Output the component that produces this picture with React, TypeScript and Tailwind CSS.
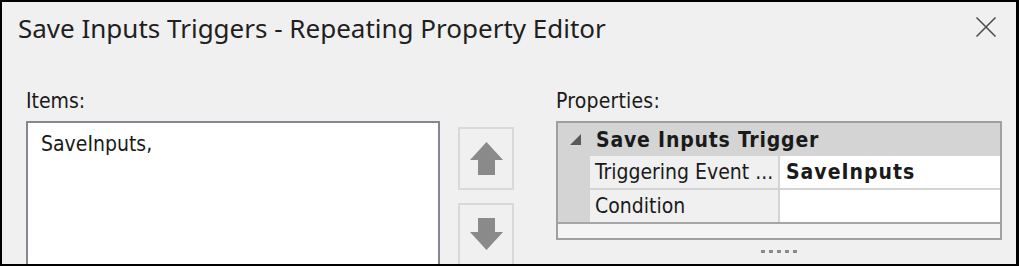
export default function App() {
  const tah = "font-['DejaVu_Sans_Condensed','DejaVu_Sans',sans-serif]";
  return (
    <div className="w-[1019px] h-[266px] overflow-hidden bg-[#f0f0f0] border-2 border-r-[3px] border-black flex flex-col">
      <div className="h-[56px] shrink-0 flex items-start justify-between pl-[16px] pr-[20px]">
        <span className="mt-[11px] font-['Noto_Sans',sans-serif] text-[26px] leading-[30px] text-[#1f1f1f] whitespace-nowrap">
          Save Inputs Triggers - Repeating Property Editor
        </span>
        <svg className="mt-[15px]" width="20" height="20" viewBox="0 0 20 20">
          <path d="M0.5 0.5 L19.5 19.5 M19.5 0.5 L0.5 19.5" stroke="#4a4a4a" strokeWidth="1.5" fill="none" />
        </svg>
      </div>
      <div className={`flex pl-[24px] ${tah} text-[21px] text-[#1a1a1a]`}>
        <div className="w-[414px] shrink-0 flex flex-col">
          <div className="h-[63px] pt-[31px] leading-[24px]">Items:</div>
          <div className="h-[200px] border-2 border-[#828790] bg-white pl-[13px] pt-[9px] leading-[24px]">
            SaveInputs,
          </div>
        </div>
        <div className="ml-[18px] shrink-0 flex flex-col gap-[13px] pt-[69px]">
          <div className="w-[56px] h-[63px] border-2 border-[#d9d9d9] flex items-center justify-center">
            <svg width="33" height="33" viewBox="0 0 33 33">
              <polygon points="16.5,0 33,18 25,18 25,33 8,33 8,18 0,18" fill="#8a8a8a" />
            </svg>
          </div>
          <div className="w-[56px] h-[63px] border-2 border-[#d9d9d9] flex items-start justify-center pt-[13px]">
            <svg width="33" height="33" viewBox="0 0 33 33">
              <polygon points="8,0 25,0 25,14 33,14 16.5,32 0,14 8,14" fill="#8a8a8a" />
            </svg>
          </div>
        </div>
        <div className="ml-[42px] w-[446px] shrink-0 flex flex-col">
          <div className="h-[63px] pt-[31px] leading-[24px] tracking-[0.2px]">Properties:</div>
          <div className="h-[119px] border-2 border-[#a0a0a0] flex flex-col">
            <div className="h-[33px] shrink-0 bg-[#d4d4d4] flex items-center">
              <svg className="ml-[12px]" width="11" height="11" viewBox="0 0 11 11">
                <polygon points="11,0 11,11 0,11" fill="#595959" />
              </svg>
              <span className="ml-[15px] font-bold leading-[24px] tracking-[0.8px]">Save Inputs Trigger</span>
            </div>
            <div className="h-[34px] shrink-0 flex border-b-2 border-[#d4d4d4]">
              <div className="w-[32px] bg-[#d4d4d4]" />
              <div className="w-[188px] bg-[#f0f0f0] pl-[5px] flex items-center whitespace-nowrap overflow-hidden leading-[24px]">
                Triggering Event ...
              </div>
              <div className="w-[2px] bg-[#d4d4d4]" />
              <div className="flex-1 bg-white pl-[6px] flex items-center font-bold leading-[24px] tracking-[1px]">SaveInputs</div>
            </div>
            <div className="h-[32px] shrink-0 flex">
              <div className="w-[32px] bg-[#d4d4d4]" />
              <div className="w-[188px] bg-[#f0f0f0] pl-[5px] flex items-center leading-[24px]">Condition</div>
              <div className="w-[2px] bg-[#d4d4d4]" />
              <div className="flex-1 bg-white" />
            </div>
            <div className="h-[2px] shrink-0 bg-[#a6a6a6]" />
            <div className="flex-1 bg-[#f4f4f4]" />
          </div>
          <div className="mt-[10px] flex justify-center gap-[4px]">
            <div className="w-[4px] h-[3px] bg-[#8a8a8a]" />
            <div className="w-[4px] h-[3px] bg-[#8a8a8a]" />
            <div className="w-[4px] h-[3px] bg-[#8a8a8a]" />
            <div className="w-[4px] h-[3px] bg-[#8a8a8a]" />
            <div className="w-[4px] h-[3px] bg-[#8a8a8a]" />
          </div>
        </div>
      </div>
    </div>
  );
}
